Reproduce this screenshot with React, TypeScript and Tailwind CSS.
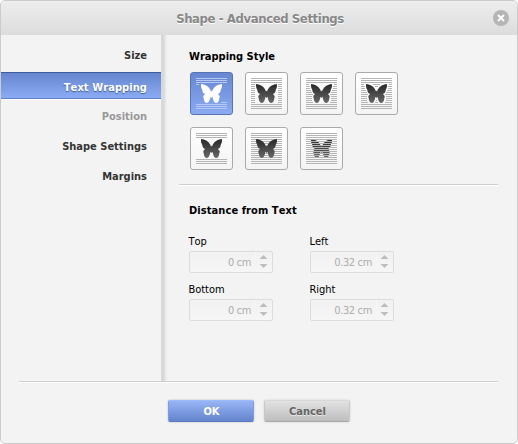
import React from "react";

type Wrap = "inline" | "square" | "tight" | "through" | "topBottom" | "behind" | "front";

const WRAPS: Wrap[] = ["inline", "square", "tight", "through", "topBottom", "behind", "front"];

const BUTTERFLY =
  "M0.1 0 C3.6 0.2 7.2 2 9 5.2 L10 7.4 L10.5 6.6 L11 7.4 L12 5.2 C13.8 2 17.4 0.2 20.9 0 C21.2 2.8 20.6 4.6 19.7 6 C19.6 8.2 18.4 9.5 16.8 10 C18.6 11.2 19.3 12.8 18.2 14.4 C18.2 16.8 16.8 19 15 19 C13 18.8 12.2 16 11.5 12.8 L10.5 14 L9.5 12.8 C8.8 16 8 18.8 6 19 C4.2 19 2.8 16.8 2.8 14.4 C1.7 12.8 2.4 11.2 4.2 10 C2.6 9.5 1.4 8.2 1.3 6 C0.4 4.6 -0.2 2.8 0.1 0 Z";

function segments(kind: Wrap, y: number): [number, number][] {
  const outer = y < 6 || y > 24;
  if (outer || kind === "behind" || kind === "front") return [[0, 31]];
  if (kind === "inline") {
    if (y === 6) return [[0, 3]];
    if (y === 24) return [[25, 6]];
    return [];
  }
  if (kind === "topBottom") return [];
  if (kind === "square") return [[0, 4], [27, 4]];
  const edge: Record<number, number> = { 6: 3, 8: 4, 10: 4, 12: 5, 14: 6, 16: 7, 18: 6, 20: 6, 22: 6, 24: 7 };
  const w = edge[y];
  const result: [number, number][] = [[0, w], [31 - w, w]];
  if (kind === "through") {
    if (y === 6) result.push([12, 7]);
    if (y === 8) result.push([14, 3]);
    if (y === 22) result.push([15, 1]);
    if (y === 24) result.push([14, 3]);
  }
  return result;
}

function WrapIcon({ kind }: { kind: Wrap }) {
  const active = kind === "inline";
  const rows = Array.from({ length: 16 }, (_, i) => i * 2);
  const lines = rows.flatMap((y) =>
    segments(kind, y).map(([x, w]) => (
      <rect key={`${y}-${x}`} x={x} y={y} width={w} height="1" fill={active ? "#b5c8f2" : "#b5b5b5"} />
    ))
  );
  return (
    <svg width="31" height="31" viewBox="0 0 31 31" className="block">
      <defs>
        <linearGradient id={`wing-${kind}`} x1="0" y1="0" x2="0" y2="1">
          <stop offset="0" stopColor={active ? "#fff" : "#272727"} />
          <stop offset="1" stopColor={active ? "#fff" : "#686868"} />
        </linearGradient>
      </defs>
      {kind !== "front" && lines}
      <path d={BUTTERFLY} transform="translate(5 6)" fill={`url(#wing-${kind})`} />
      {kind === "front" && lines}
    </svg>
  );
}

function Spinner({ label, value }: { label: string; value: string }) {
  return (
    <div className="h-12 w-[121px]">
      <div className="-ml-[0.5px] h-[17px] pt-px text-[11px] leading-[14px] tracking-[-0.05px] text-black">{label}</div>
      <div className="flex h-[22px] w-[84px] items-center rounded-[2px] border border-[#dcdcdc] bg-linear-to-b from-[#f1f1f1] to-[#f6f6f6]">
        <span className="flex-1 pt-px pr-px text-right text-[11px] leading-[20px] tracking-[-0.35px] text-[#adadad]">{value}</span>
        <svg width="20" height="20" viewBox="0 0 20 20" className="block" fill="#bdbdbd">
          <path d="M11.5 3 L15.5 7 H7.5 Z" />
          <path d="M7.5 12 H15.5 L11.5 16 Z" />
          <path d="M3 0 H4 V20 H3 Z" fill="#f6f6f6" />
        </svg>
      </div>
    </div>
  );
}

const NAV = "pr-[14px] text-right text-[11px] font-bold";

export default function App() {
  return (
    <div className="h-[444px] w-[518px] overflow-hidden bg-white font-['DejaVu_Sans_Condensed','DejaVu_Sans',sans-serif] [font-kerning:none] [font-stretch:condensed]">
      <div className="flex h-full flex-col overflow-hidden rounded-[5px] border border-[#cbcbcb] bg-[#f3f3f3]">
        <header className="flex h-[34px] shrink-0 items-center bg-linear-to-b from-[#ededed] to-[#dcdcdc] pr-[8px] pl-[26px]">
          <h1 className="flex-1 pt-px text-center text-[13px] leading-[18px] font-bold tracking-[-0.4px] text-[#888] [text-shadow:0_1px_0_#fff]">
            Shape - Advanced Settings
          </h1>
          <button aria-label="Close" className="size-4">
            <svg width="16" height="16" viewBox="0 0 16 16" className="block">
              <circle cx="8" cy="8" r="8" fill="#b5b5b5" />
              <path d="M5 5 L11 11 M11 5 L5 11" stroke="#fff" strokeWidth="2" />
            </svg>
          </button>
        </header>

        <main className="flex h-[346px] shrink-0">
          <nav className="w-[160px] text-[#333]">
            <div className={`${NAV} h-[37px] pt-[14px] leading-[14px]`}>Size</div>
            <div className={`${NAV} h-[27px] border-t border-b border-t-[#405d9b] border-b-[#6181c5] bg-linear-to-b from-[#6585cf] to-[#8bacf4] pt-[8px] leading-[14px] tracking-[0.08px] text-white [text-shadow:0_1px_1px_#445d91]`}>
              Text Wrapping
            </div>
            <div className={`${NAV} h-[30px] border-t border-white pt-[10px] leading-[14px] text-[#999]`}>Position</div>
            <div className={`${NAV} h-[30px] pt-[11px] leading-[14px]`}>Shape Settings</div>
            <div className={`${NAV} h-[30px] pt-[11px] leading-[14px]`}>Margins</div>
          </nav>
          <div className="w-[6px] bg-linear-to-r from-[#d8d8d8] from-40% to-[#f3f3f3]" />
          <div className="flex-1 pr-[19px] pl-[12px]">
            <div className="h-[150px] border-b border-[#cecece] pt-[15px] pl-[10px] shadow-[0_1px_0_#fff]">
              <h2 className="text-[11px] leading-[14px] font-bold text-black">Wrapping Style</h2>
              <div className="mt-[8px] flex w-[220px] flex-wrap gap-x-3 gap-y-3 pl-px">
                {WRAPS.map((kind) => (
                  <button
                    key={kind}
                    aria-label={kind}
                    className={
                      kind === "inline"
                        ? "size-[43px] rounded-[3px] border border-[#5874b3] bg-linear-to-b from-[#6787d1] to-[#8aabf2] p-[5px]"
                        : "size-[43px] rounded-[3px] border border-[#aaa] bg-linear-to-b from-white to-[#f4f4f4] p-[5px]"
                    }
                  >
                    <WrapIcon kind={kind} />
                  </button>
                ))}
              </div>
            </div>
            <div className="pt-[19px] pl-[10px]">
              <h2 className="text-[11px] leading-[14px] font-bold tracking-[0.08px] text-black">Distance from Text</h2>
              <div className="mt-[16px] flex w-[242px] flex-wrap">
                <Spinner label="Top" value="0 cm" />
                <Spinner label="Left" value="0.32 cm" />
                <Spinner label="Bottom" value="0 cm" />
                <Spinner label="Right" value="0.32 cm" />
              </div>
            </div>
          </div>
        </main>

        <footer className="mr-[19px] ml-[18px] flex justify-center gap-[10px] border-t border-[#cecece] pt-[18px] shadow-[inset_0_1px_0_#fff]">
          <button className="h-[22px] w-[86px] rounded-[2px] border border-t-[#9dbafa] border-r-[#7d9de0] border-b-[#5b7ac2] border-l-[#7d9de0] bg-linear-to-b from-[#98b5f5] to-[#6484cd] pt-[2px] pl-[2px] text-[11px] leading-[18px] font-bold text-white shadow-[0_0_2px_#b8b8b8]">
            OK
          </button>
          <button className="h-[22px] w-[86px] rounded-[2px] border border-t-[#d8d8d8] border-r-[#c9c9c9] border-b-[#aaa] border-l-[#c9c9c9] bg-linear-to-b from-[#e2e2e2] to-[#bebebe] pt-[2px] pl-[2px] text-[11px] leading-[18px] font-bold text-[#666] shadow-[0_0_2px_#c8c8c8] [text-shadow:0_1px_0_#e6e6e6]">
            Cancel
          </button>
        </footer>
      </div>
    </div>
  );
}
